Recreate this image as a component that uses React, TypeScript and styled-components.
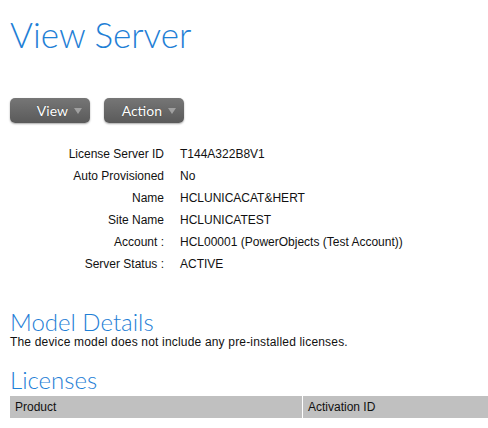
import React from "react";
import styled, { createGlobalStyle } from "styled-components";

const GlobalStyle = createGlobalStyle`
  body {
    margin: 0;
    background: #fff;
    font-family: "Liberation Sans", Arial, sans-serif;
    font-size: 12px;
    color: #111;
  }
`;

const Page = styled.div`
  padding: 0 0 0 10px;
`;

const Title = styled.h1`
  margin: 0;
  padding-top: 12px;
  font-family: Lato, sans-serif;
  font-weight: 300;
  font-size: 35px;
  line-height: 44px;
  color: #1f80d6;
`;

const Toolbar = styled.div`
  display: flex;
  gap: 14px;
  margin-top: 42px;
`;

const MenuButton = styled.button`
  display: flex;
  align-items: center;
  justify-content: flex-end;
  gap: 6px;
  width: 80px;
  height: 25px;
  padding: 0 8px 0 0;
  border: none;
  border-radius: 5px;
  background: linear-gradient(#767676, #5a5a5a);
  box-shadow: 0 1px 2px rgba(0, 0, 0, 0.35);
  color: #fff;
  font-family: Lato, sans-serif;
  font-size: 14px;
  text-shadow: 0 0 1px rgba(0, 0, 0, 0.5);
  cursor: pointer;
`;

const Caret = styled.span`
  width: 0;
  height: 0;
  border-left: 4px solid transparent;
  border-right: 4px solid transparent;
  border-top: 6px solid #a0a0a0;
`;

const Details = styled.dl`
  display: grid;
  grid-template-columns: 154px auto;
  column-gap: 16px;
  margin: 20px 0 0;
`;

const Label = styled.dt`
  text-align: right;
  line-height: 22px;
`;

const Value = styled.dd`
  margin: 0;
  line-height: 22px;
`;

const SectionTitle = styled.h2<{ $top: number }>`
  margin: ${(p) => p.$top}px 0 0;
  font-family: Lato, sans-serif;
  font-weight: 300;
  font-size: 24px;
  line-height: 26px;
  color: #1f80d6;
`;

const Note = styled.p`
  margin: 0;
  line-height: 14px;
  letter-spacing: 0.18px;
`;

const Table = styled.table`
  width: 100%;
  margin-top: 3px;
  border-collapse: collapse;
`;

const Th = styled.th<{ $w?: string }>`
  background: #c0c0c0;
  text-align: left;
  font-weight: normal;
  height: 22px;
  padding: 0 5px;
  width: ${(p) => p.$w || "auto"};
  border-left: 1px solid #fff;
  &:first-child {
    border-left: none;
  }
`;

const rows: [string, string][] = [
  ["License Server ID", "T144A322B8V1"],
  ["Auto Provisioned", "No"],
  ["Name", "HCLUNICACAT&HERT"],
  ["Site Name", "HCLUNICATEST"],
  ["Account :", "HCL00001 (PowerObjects (Test Account))"],
  ["Server Status :", "ACTIVE"],
];

export default function App() {
  return (
    <>
      <GlobalStyle />
      <Page>
        <Title>View Server</Title>
        <Toolbar>
          <MenuButton>
            View <Caret />
          </MenuButton>
          <MenuButton>
            Action <Caret />
          </MenuButton>
        </Toolbar>
        <Details>
          {rows.map(([k, v]) => (
            <React.Fragment key={k}>
              <Label>{k}</Label>
              <Value>{v}</Value>
            </React.Fragment>
          ))}
        </Details>
        <SectionTitle $top={34}>Model Details</SectionTitle>
        <Note>The device model does not include any pre-installed licenses.</Note>
        <SectionTitle $top={18}>Licenses</SectionTitle>
        <Table>
          <thead>
            <tr>
              <Th $w="282px">Product</Th>
              <Th>Activation ID</Th>
            </tr>
          </thead>
        </Table>
      </Page>
    </>
  );
}
